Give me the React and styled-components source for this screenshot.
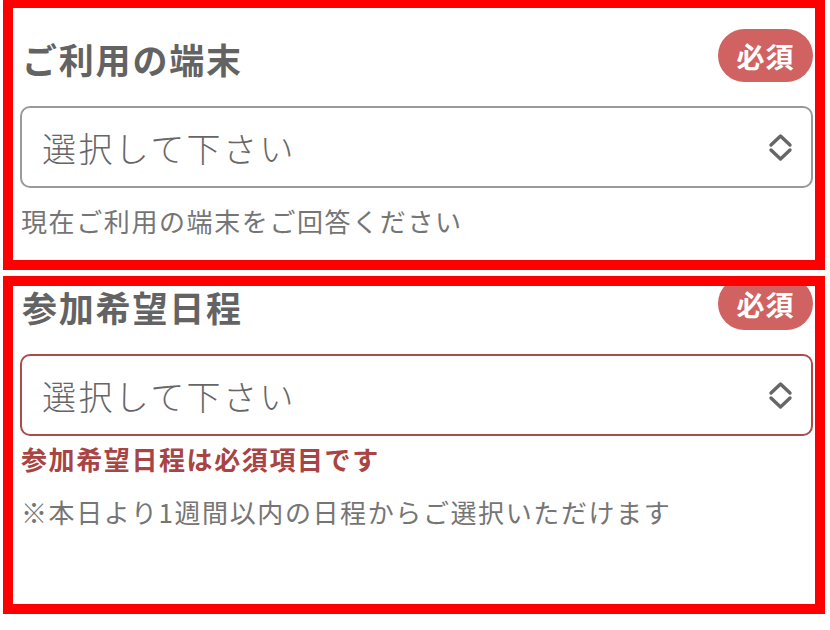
import React from "react";
import styled, { createGlobalStyle } from "styled-components";

const Global = createGlobalStyle`
  html, body { margin: 0; padding: 0; background: #ffffff; }
  body { font-family: "Noto Sans CJK JP", "Noto Sans", sans-serif; }
`;

const Page = styled.div`
  display: flex;
  flex-direction: column;
  gap: 6px;
  width: 822px;
  margin: -2px 0 0 3px;
`;

const Card = styled.section`
  border: 10px solid #ff0000;
  height: ${(p) => p.$h}px;
  box-sizing: border-box;
  overflow: hidden;
  background: #fff;
`;

const Inner = styled.div`
  display: flex;
  flex-direction: column;
  padding: 0 2px 0 7px;
  margin-top: ${(p) => p.$shift}px;
`;

const Header = styled.div`
  display: flex;
  align-items: center;
  justify-content: space-between;
  height: 53px;
`;

const Title = styled.h2`
  margin: 0;
  padding-left: 2px;
  font-size: 35px;
  letter-spacing: 1.8px;
  font-weight: 700;
  color: #636363;
  line-height: 1;
  transform: translateY(3px);
`;

const Badge = styled.span`
  display: inline-flex;
  align-items: center;
  justify-content: center;
  width: 95px;
  height: 53px;
  border-radius: 27px;
  background: #d06262;
  color: #fff;
  font-size: 28px;
  font-weight: 700;
  letter-spacing: 1px;
`;

const Select = styled.div`
  display: flex;
  align-items: center;
  justify-content: space-between;
  margin-top: 24px;
  height: 82px;
  box-sizing: border-box;
  border: 2px solid ${(p) => (p.$error ? "#a84c4c" : "#9a9a9a")};
  border-radius: 10px;
  padding: 0 18px 0 20px;
`;

const Placeholder = styled.span`
  font-size: 34px;
  letter-spacing: 2.4px;
  color: #666;
  font-weight: 300;
`;

const Hint = styled.p`
  margin: ${(p) => p.$mt}px 0 0 0;
  padding-left: 1px;
  font-size: 26px;
  line-height: 35px;
  letter-spacing: 1.6px;
  color: #757575;
`;

const ErrorText = styled.p`
  margin: 5px 0 0 0;
  padding-left: 1px;
  font-size: 26px;
  line-height: 35px;
  letter-spacing: 1.6px;
  font-weight: 700;
  color: #a84444;
`;

const Chevron = () => (
  <svg width="25" height="29" viewBox="0 0 25 29" fill="none">
    <polyline points="3,12 12.5,3 22,12" stroke="#666" strokeWidth="3.4" strokeLinecap="round" strokeLinejoin="round" />
    <polyline points="3,17 12.5,26 22,17" stroke="#666" strokeWidth="3.4" strokeLinecap="round" strokeLinejoin="round" />
  </svg>
);

export default function App() {
  return (
    <>
      <Global />
      <Page>
        <Card $h={272}>
          <Inner $shift={21}>
            <Header>
              <Title>ご利用の端末</Title>
              <Badge>必須</Badge>
            </Header>
            <Select>
              <Placeholder>選択して下さい</Placeholder>
              <Chevron />
            </Select>
            <Hint $mt={15}>現在ご利用の端末をご回答ください</Hint>
          </Inner>
        </Card>
        <Card $h={338}>
          <Inner $shift={-9}>
            <Header>
              <Title>参加希望日程</Title>
              <Badge>必須</Badge>
            </Header>
            <Select $error>
              <Placeholder>選択して下さい</Placeholder>
              <Chevron />
            </Select>
            <ErrorText>参加希望日程は必須項目です</ErrorText>
            <Hint $mt={18}>※本日より1週間以内の日程からご選択いただけます</Hint>
          </Inner>
        </Card>
      </Page>
    </>
  );
}
